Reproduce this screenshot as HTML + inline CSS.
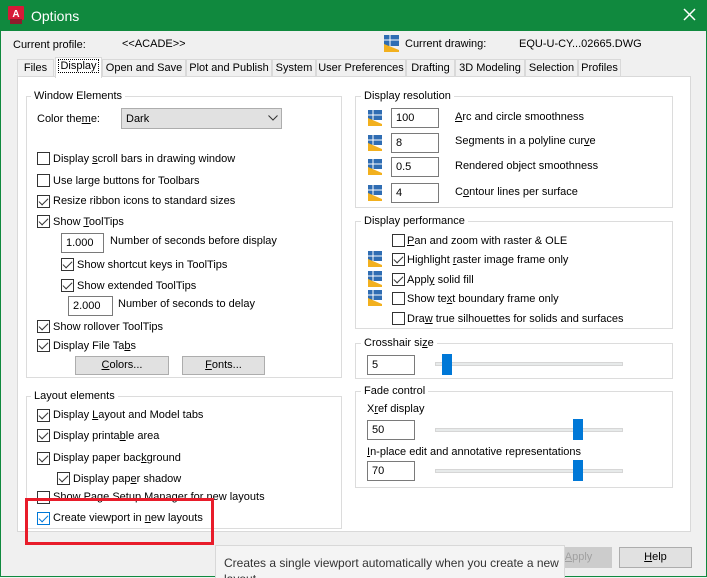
<!DOCTYPE html>
<html style="overflow:hidden"><head><meta charset="utf-8"><style>
*{box-sizing:border-box;margin:0;padding:0}
html,body{width:707px;height:578px;overflow:hidden}
body{background:#f0f0f0;font-family:"Liberation Sans",sans-serif;font-size:11px;color:#000;position:relative}
.a{position:absolute;white-space:nowrap}
.win{position:absolute;left:0;top:0;width:707px;height:577px;border:1px solid #10893e;border-top:none}
.title{position:absolute;left:0;top:0;width:707px;height:31px;background:#10893e}
.tab{position:absolute;top:59px;height:18px;border:1px solid #d9d9d9;border-bottom:none;background:#f0f0f0;text-align:center;line-height:16px;white-space:nowrap;overflow:hidden}
.panel{position:absolute;left:17px;top:76px;width:674px;height:456px;background:#fff;border:1px solid #d9d9d9}
.gb{position:absolute;border:1px solid #dcdcdc}
.gt{position:absolute;background:#fff;padding:0 3px;line-height:14px;white-space:nowrap}
.cb{position:absolute;width:13px;height:13px;border:1px solid #333;background:#fff}
.cb.c::after{content:"";position:absolute;left:3px;top:0px;width:4px;height:8px;border:solid #333;border-width:0 1.3px 1.3px 0;transform:rotate(45deg)}
.cb.blue{border-color:#0078d7}.cb.blue::after{border-color:#0078d7}
.tb{position:absolute;height:20px;border:1px solid #7a7a7a;background:#fff;padding:3px 0 0 4px;line-height:13px}
.btn{position:absolute;height:19px;border:1px solid #adadad;background:#e1e1e1;text-align:center;line-height:17px}
.trk{position:absolute;height:4px;background:#e7eaea;border:1px solid #d6d6d6}
.th{position:absolute;width:10px;height:21px;background:#0078d7}
u{text-decoration:underline}
</style></head><body>
<div class="title"></div>
<div class="win"></div>
<svg class="a" style="left:8px;top:6px" width="16" height="18"><rect x="0" y="0" width="16" height="14" rx="1" fill="#d71a38"/><rect x="2" y="13" width="12" height="5" fill="#8f1b2c"/><text x="8" y="11" font-size="10" font-weight="bold" fill="#fff" text-anchor="middle" font-family="Liberation Sans">A</text></svg>
<div class="a" style="left:31px;top:8px;font-size:14px;color:#fff">Options</div>
<svg class="a" style="left:683px;top:8px" width="13" height="13"><path d="M1 1L12 12M12 1L1 12" stroke="#fff" stroke-width="1.5"/></svg>

<div class="a" style="left:13px;top:39px">Current profile:</div>
<div class="a" style="left:122px;top:38px">&lt;&lt;ACADE&gt;&gt;</div>
<svg class="a" style="left:384px;top:35px" width="15" height="17"><rect x="0" y="0" width="15" height="11" fill="#2f6db3"/><path d="M0 17V9L15 15V17Z" fill="#f2b01e"/><path d="M0 5H15M6 0V11" stroke="#fff" stroke-width="1"/></svg>
<div class="a" style="left:405px;top:38px">Current drawing:</div>
<div class="a" style="left:519px;top:38px">EQU-U-CY...02665.DWG</div>

<div class="tab" style="left:17px;width:37px">Files</div>
<div class="tab" style="left:102px;width:84px">Open and Save</div>
<div class="tab" style="left:186px;width:86px">Plot and Publish</div>
<div class="tab" style="left:272px;width:44px">System</div>
<div class="tab" style="left:316px;width:90px">User Preferences</div>
<div class="tab" style="left:406px;width:49px">Drafting</div>
<div class="tab" style="left:455px;width:70px">3D Modeling</div>
<div class="tab" style="left:525px;width:53px">Selection</div>
<div class="tab" style="left:578px;width:43px">Profiles</div>
<div class="panel"></div>
<div class="tab" style="left:55px;top:57px;width:47px;height:21px;background:#fff;z-index:2;overflow:visible"><span style="outline:1px dotted #000;padding:0 1px">Display</span></div>

<!-- Window Elements -->
<div class="gb" style="left:26px;top:96px;width:316px;height:282px"></div>
<div class="gt" style="left:31px;top:89px">Window Elements</div>
<div class="a" style="left:37px;top:113px">Color the<u>m</u>e:</div>
<div class="a" style="left:121px;top:108px;width:161px;height:21px;border:1px solid #adadad;background:#e1e1e1;padding:4px 0 0 4px">Dark</div>
<svg class="a" style="left:268px;top:115px" width="10" height="6"><path d="M0.5 0.5L5 5L9.5 0.5" stroke="#333" fill="none"/></svg>

<div class="cb" style="left:37px;top:152px"></div><div class="a" style="left:53px;top:153px">Display <u>s</u>croll bars in drawing window</div>
<div class="cb" style="left:37px;top:174px"></div><div class="a" style="left:53px;top:175px">Use large buttons for Toolbars</div>
<div class="cb c" style="left:37px;top:195px"></div><div class="a" style="left:53px;top:195px">Resize ribbon icons to standard sizes</div>
<div class="cb c" style="left:37px;top:215px"></div><div class="a" style="left:53px;top:216px">Show <u>T</u>oolTips</div>
<div class="tb" style="left:61px;top:233px;width:43px">1.000</div><div class="a" style="left:110px;top:235px">Number of seconds before display</div>
<div class="cb c" style="left:61px;top:258px"></div><div class="a" style="left:77px;top:259px">Show shortcut keys in ToolTips</div>
<div class="cb c" style="left:61px;top:279px"></div><div class="a" style="left:77px;top:280px">Show extended ToolTips</div>
<div class="tb" style="left:68px;top:296px;width:45px">2.000</div><div class="a" style="left:118px;top:298px">Number of seconds to delay</div>
<div class="cb c" style="left:37px;top:320px"></div><div class="a" style="left:53px;top:321px">Show rollover ToolTips</div>
<div class="cb c" style="left:37px;top:339px"></div><div class="a" style="left:53px;top:340px">Display File Ta<u>b</u>s</div>
<div class="btn" style="left:75px;top:356px;width:94px"><u>C</u>olors...</div>
<div class="btn" style="left:182px;top:356px;width:83px"><u>F</u>onts...</div>

<!-- Layout elements -->
<div class="gb" style="left:26px;top:396px;width:316px;height:133px"></div>
<div class="gt" style="left:31px;top:389px">Layout elements</div>
<div class="cb c" style="left:37px;top:409px"></div><div class="a" style="left:53px;top:409px">Display <u>L</u>ayout and Model tabs</div>
<div class="cb c" style="left:37px;top:429px"></div><div class="a" style="left:53px;top:430px">Display printa<u>b</u>le area</div>
<div class="cb c" style="left:37px;top:452px"></div><div class="a" style="left:53px;top:452px">Display paper bac<u>k</u>ground</div>
<div class="cb c" style="left:57px;top:472px"></div><div class="a" style="left:73px;top:473px">Display pap<u>e</u>r shadow</div>
<div class="cb" style="left:37px;top:491px"></div><div class="a" style="left:53px;top:491px">Show Page Setup Manager for new layouts</div>
<div class="cb c blue" style="left:37px;top:512px"></div><div class="a" style="left:53px;top:512px">Create viewport in <u>n</u>ew layouts</div>

<!-- Display resolution -->
<div class="gb" style="left:355px;top:96px;width:318px;height:112px"></div>
<div class="gt" style="left:361px;top:89px">Display resolution</div>
<svg class="a" style="left:368px;top:110px" width="14" height="16"><rect width="14" height="10" fill="#2f6db3"/><path d="M0 16V8L14 14V16Z" fill="#f2b01e"/><path d="M0 5H14M5 0V10" stroke="#fff"/></svg>
<div class="tb" style="left:391px;top:108px;width:48px">100</div><div class="a" style="left:455px;top:111px"><u>A</u>rc and circle smoothness</div>
<svg class="a" style="left:368px;top:135px" width="14" height="16"><rect width="14" height="10" fill="#2f6db3"/><path d="M0 16V8L14 14V16Z" fill="#f2b01e"/><path d="M0 5H14M5 0V10" stroke="#fff"/></svg>
<div class="tb" style="left:391px;top:133px;width:48px">8</div><div class="a" style="left:455px;top:135px">Segments in a polyline cur<u>v</u>e</div>
<svg class="a" style="left:368px;top:159px" width="14" height="16"><rect width="14" height="10" fill="#2f6db3"/><path d="M0 16V8L14 14V16Z" fill="#f2b01e"/><path d="M0 5H14M5 0V10" stroke="#fff"/></svg>
<div class="tb" style="left:391px;top:157px;width:48px">0.5</div><div class="a" style="left:455px;top:160px">Rendered object smoothness</div>
<svg class="a" style="left:368px;top:185px" width="14" height="16"><rect width="14" height="10" fill="#2f6db3"/><path d="M0 16V8L14 14V16Z" fill="#f2b01e"/><path d="M0 5H14M5 0V10" stroke="#fff"/></svg>
<div class="tb" style="left:391px;top:183px;width:48px">4</div><div class="a" style="left:455px;top:186px">C<u>o</u>ntour lines per surface</div>

<!-- Display performance -->
<div class="gb" style="left:355px;top:221px;width:318px;height:108px"></div>
<div class="gt" style="left:361px;top:214px">Display performance</div>
<div class="cb" style="left:392px;top:234px"></div><div class="a" style="left:407px;top:235px"><u>P</u>an and zoom with raster &amp; OLE</div>
<svg class="a" style="left:368px;top:251px" width="14" height="16"><rect width="14" height="10" fill="#2f6db3"/><path d="M0 16V8L14 14V16Z" fill="#f2b01e"/><path d="M0 5H14M5 0V10" stroke="#fff"/></svg>
<div class="cb c" style="left:392px;top:253px"></div><div class="a" style="left:407px;top:254px">Highlight <u>r</u>aster image frame only</div>
<svg class="a" style="left:368px;top:271px" width="14" height="16"><rect width="14" height="10" fill="#2f6db3"/><path d="M0 16V8L14 14V16Z" fill="#f2b01e"/><path d="M0 5H14M5 0V10" stroke="#fff"/></svg>
<div class="cb c" style="left:392px;top:273px"></div><div class="a" style="left:407px;top:274px">Appl<u>y</u> solid fill</div>
<svg class="a" style="left:368px;top:290px" width="14" height="16"><rect width="14" height="10" fill="#2f6db3"/><path d="M0 16V8L14 14V16Z" fill="#f2b01e"/><path d="M0 5H14M5 0V10" stroke="#fff"/></svg>
<div class="cb" style="left:392px;top:292px"></div><div class="a" style="left:407px;top:293px">Show te<u>x</u>t boundary frame only</div>
<div class="cb" style="left:392px;top:312px"></div><div class="a" style="left:407px;top:313px">Dra<u>w</u> true silhouettes for solids and surfaces</div>

<!-- Crosshair -->
<div class="gb" style="left:355px;top:343px;width:318px;height:36px"></div>
<div class="gt" style="left:361px;top:336px">Crosshair si<u>z</u>e</div>
<div class="tb" style="left:367px;top:355px;width:48px">5</div>
<div class="trk" style="left:435px;top:362px;width:188px"></div>
<div class="th" style="left:442px;top:354px"></div>

<!-- Fade -->
<div class="gb" style="left:355px;top:391px;width:318px;height:97px"></div>
<div class="gt" style="left:361px;top:384px">Fade control</div>
<div class="a" style="left:367px;top:403px">X<u>r</u>ef display</div>
<div class="tb" style="left:367px;top:420px;width:48px">50</div>
<div class="trk" style="left:435px;top:428px;width:188px"></div>
<div class="th" style="left:573px;top:419px"></div>
<div class="a" style="left:367px;top:446px"><u>I</u>n-place edit and annotative representations</div>
<div class="tb" style="left:367px;top:461px;width:48px">70</div>
<div class="trk" style="left:435px;top:469px;width:188px"></div>
<div class="th" style="left:573px;top:460px"></div>

<div class="btn" style="left:545px;top:547px;width:67px;height:21px;color:#a0a0a0;border-color:#ccc;background:#ccc;line-height:19px"><u>A</u>pply</div>
<div class="btn" style="left:619px;top:547px;width:73px;height:21px;line-height:19px"><u>H</u>elp</div>

<div class="a" style="left:25px;top:498px;width:189px;height:47px;border:3px solid #e81c2a"></div>

<div class="a" style="left:215px;top:545px;width:350px;height:33px;background:#f4f4f4;border:1px solid #d8d8d8;border-bottom:none;overflow:hidden">
<div class="a" style="left:8px;top:10px;color:#333;font-size:12px">Creates a single viewport automatically when you create a new</div>
<div class="a" style="left:8px;top:26px;color:#333;font-size:12px">layout</div>
</div>
</body></html>
